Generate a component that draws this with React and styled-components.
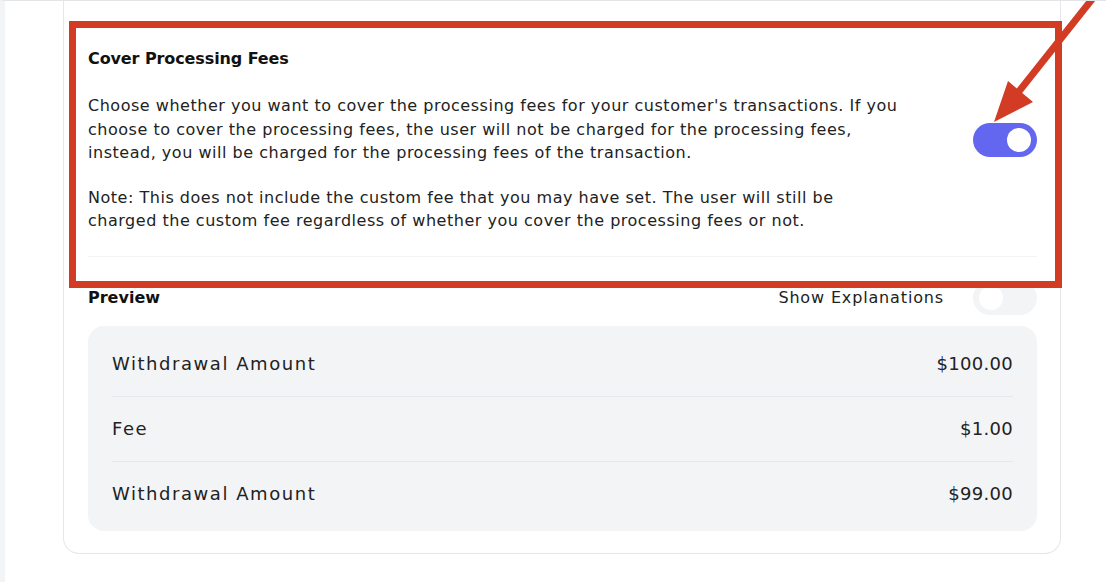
import React from "react";
import styled, { createGlobalStyle } from "styled-components";

const Global = createGlobalStyle`
  html, body { margin: 0; padding: 0; background: #ffffff; }
  body { font-family: "DejaVu Sans", "Noto Sans", sans-serif; color: #1f1f1f; }
  * { box-sizing: border-box; }
`;

const Page = styled.div`
  position: relative;
  width: 1106px;
  height: 582px;
  overflow: hidden;
  border-top: 1px solid #e3e4e8;
  border-left: 5px solid #f3f4f6;
  padding-left: 58px;
`;

const Card = styled.div`
  width: 998px;
  border: 1px solid #e5e7eb;
  border-top: 0;
  border-radius: 0 0 16px 16px;
  padding: 0 23px 22px 24px;
  background: #fff;
`;

const Section = styled.div`
  display: flex;
  align-items: center;
  justify-content: space-between;
  padding: 46px 0 23px;
  border-bottom: 1px solid #f3f4f6;
`;

const TextBlock = styled.div`
  display: flex;
  flex-direction: column;
`;

const Title = styled.div`
  font-size: 16px;
  font-weight: 700;
  line-height: 24px;
  letter-spacing: -0.1px;
  color: #111;
`;

const Para = styled.p`
  margin: ${(p) => (p.$note ? "21px" : "23px")} 0 0;
  font-size: 16px;
  line-height: 23.5px;
  letter-spacing: 0.52px;
  color: #222;
  white-space: nowrap;
`;

const Toggle = styled.div`
  width: 64px;
  height: 34px;
  border-radius: 17px;
  background: ${(p) => (p.$on ? "#6366ee" : "#f3f4f6")};
  display: flex;
  align-items: center;
  justify-content: ${(p) => (p.$on ? "flex-end" : "flex-start")};
  padding: 0 6px;
  flex-shrink: 0;
`;

const Knob = styled.div`
  width: 24px;
  height: 24px;
  border-radius: 50%;
  background: #fff;
`;

const PreviewHead = styled.div`
  display: flex;
  align-items: center;
  justify-content: space-between;
  margin-top: 24px;
  height: 34px;
`;

const HeadLabel = styled.div`
  font-size: 16px;
  font-weight: 700;
  color: #111;
`;

const HeadRight = styled.div`
  display: flex;
  align-items: center;
  gap: 29px;
  font-size: 16px;
  letter-spacing: 0.85px;
  color: #222;
`;

const PreviewBox = styled.div`
  margin-top: 11px;
  background: #f3f4f6;
  border-radius: 16px;
  padding: 6px 24px 5px;
`;

const Row = styled.div`
  display: flex;
  align-items: center;
  justify-content: space-between;
  box-sizing: content-box;
  height: 64px;
  font-size: 18px;
  color: #222;
  & + & { border-top: 1px solid #e5e7eb; }
`;

const Label = styled.span`
  letter-spacing: 1.55px;
`;

const Value = styled.span`
  letter-spacing: 0.3px;
`;

const Frame = styled.div`
  position: absolute;
  left: 64px;
  top: 20px;
  width: 993px;
  height: 267px;
  border: 7px solid #d23b24;
  pointer-events: none;
`;

const Arrow = styled.svg`
  position: absolute;
  left: 0;
  top: 0;
  pointer-events: none;
`;

export default function App() {
  return (
    <>
      <Global />
      <Page>
        <Card>
          <Section>
            <TextBlock>
              <Title>Cover Processing Fees</Title>
              <Para>
                Choose whether you want to cover the processing fees for your customer's transactions. If you
                <br />
                choose to cover the processing fees, the user will not be charged for the processing fees,
                <br />
                instead, you will be charged for the processing fees of the transaction.
              </Para>
              <Para $note>
                Note: This does not include the custom fee that you may have set. The user will still be
                <br />
                charged the custom fee regardless of whether you cover the processing fees or not.
              </Para>
            </TextBlock>
            <Toggle $on>
              <Knob />
            </Toggle>
          </Section>
          <PreviewHead>
            <HeadLabel>Preview</HeadLabel>
            <HeadRight>
              Show Explanations
              <Toggle>
                <Knob />
              </Toggle>
            </HeadRight>
          </PreviewHead>
          <PreviewBox>
            <Row><Label>Withdrawal Amount</Label><Value>$100.00</Value></Row>
            <Row><Label>Fee</Label><Value>$1.00</Value></Row>
            <Row><Label>Withdrawal Amount</Label><Value>$99.00</Value></Row>
          </PreviewBox>
        </Card>
        <Frame />
        <Arrow width="1106" height="582" viewBox="0 0 1106 582">
          <line x1="1092" y1="-8" x2="1008" y2="98" stroke="#d23b24" strokeWidth="7" />
          <polygon points="989,121 1003,80 1028,101" fill="#d23b24" />
        </Arrow>
      </Page>
    </>
  );
}
